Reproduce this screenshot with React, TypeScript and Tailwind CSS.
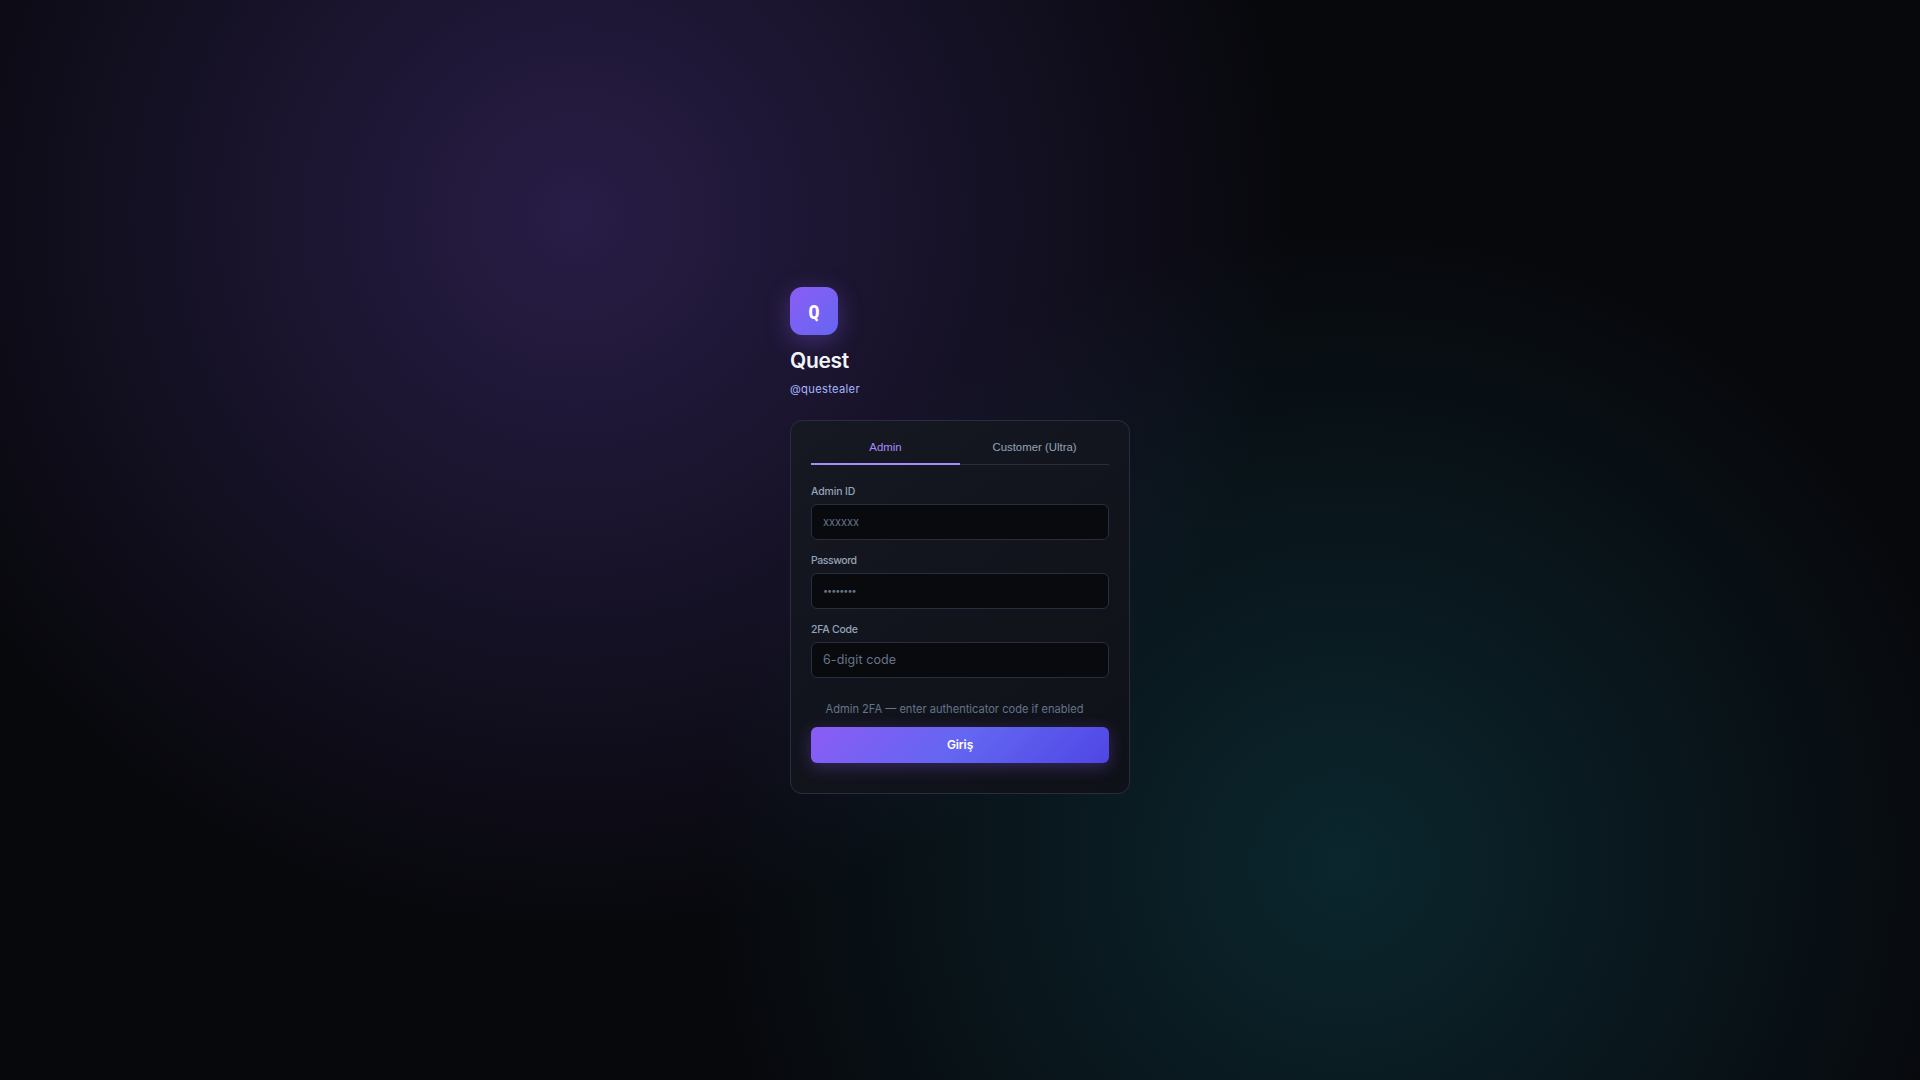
import React, { useState } from 'react';

type Tab = 'admin' | 'customer';

interface FieldProps {
  label: string;
  type?: string;
  placeholder: string;
  labelClass?: string;
  inputClass?: string;
}

const Field: React.FC<FieldProps> = ({ label, type = 'text', placeholder, labelClass = '', inputClass = '' }) => (
  <label className="mb-3 block">
    <span className={`mb-1 block h-[17px] text-[10.5px] leading-[17px] font-medium text-[#94a3b8] ${labelClass}`}>
      {label}
    </span>
    <input
      type={type}
      placeholder={placeholder}
      className={`block h-9 w-full rounded-md border border-[#2a2d40] bg-[#090a0e] px-[11px] text-[#e2e8f0] outline-none placeholder:text-[#64748b] focus:border-[#8b5cf6] ${inputClass}`}
    />
  </label>
);

const App: React.FC = () => {
  const [tab, setTab] = useState<Tab>('admin');

  const tabClass = (active: boolean) =>
    `h-[34px] flex-1 border-b-2 pt-0.5 font-['Liberation_Sans',sans-serif] text-[11.4px] ${
      active ? 'border-[#a78bfa] text-[#a78bfa]' : 'border-transparent text-[#94a3b8]'
    }`;

  return (
    <div className="flex min-h-screen items-center justify-center bg-[#07080c] bg-[radial-gradient(circle_at_30%_20%,rgba(139,92,246,0.25)_0%,transparent_45%),radial-gradient(circle_at_70%_80%,rgba(34,211,238,0.15)_0%,transparent_40%)] font-['Inter',sans-serif]">
      <div className="w-[340px]">
        {/* Brand */}
        <div className="flex h-12 w-12 items-center justify-center rounded-xl bg-linear-135 from-[#8b5cf6] to-[#6366f1] pt-1 font-['DejaVu_Sans_Mono',monospace] text-[19px] font-bold text-white shadow-[0_6px_24px_rgba(139,92,246,0.35)]">
          Q
        </div>
        <h1 className="mt-3 h-7 text-[21px] leading-7 font-semibold tracking-[-0.3px] text-[#f1f5f9]">Quest</h1>
        <p className="mt-[5px] mb-[22px] h-[18px] text-[11.2px] leading-[18px] tracking-[0.3px] text-[#a5b4fc]">
          @questealer
        </p>

        {/* Login card */}
        <div className="h-[374px] rounded-xl border border-[#2a2d40] bg-linear-145 from-[#161822] to-[#0f1118] px-5 pt-2.5">
          <div className="mb-[18px] flex h-[34px] border-b border-[#2a2d40]">
            <button type="button" onClick={() => setTab('admin')} className={tabClass(tab === 'admin')}>
              Admin
            </button>
            <button type="button" onClick={() => setTab('customer')} className={tabClass(tab === 'customer')}>
              Customer (Ultra)
            </button>
          </div>

          <form onSubmit={(e) => e.preventDefault()}>
            <Field label="Admin ID" placeholder="xxxxxx" labelClass="tracking-[-0.15px]" inputClass="text-[11px]" />
            <Field
              label="Password"
              type="password"
              placeholder="••••••••"
              labelClass="tracking-[-0.45px]"
              inputClass="text-[9px] tracking-[-1px]"
            />
            <Field
              label="2FA Code"
              placeholder="6-digit code"
              labelClass="tracking-[-0.25px]"
              inputClass="text-[12.5px] tracking-[0.1px]"
            />
            <p className="mt-[22px] mb-[9px] pr-[11px] text-center text-[11.1px] leading-[18px] text-[#64748b]">
              Admin 2FA — enter authenticator code if enabled
            </p>
            <button
              type="submit"
              className="block h-9 w-full rounded-md bg-[linear-gradient(135deg,#8b5cf6_0%,#6366f1_50%,#4f46e5_100%)] text-[12px] font-semibold tracking-[-0.1px] text-white shadow-[0_4px_16px_rgba(139,92,246,0.3)]"
            >
              Giriş
            </button>
          </form>
        </div>
      </div>
    </div>
  );
};

export default App;
